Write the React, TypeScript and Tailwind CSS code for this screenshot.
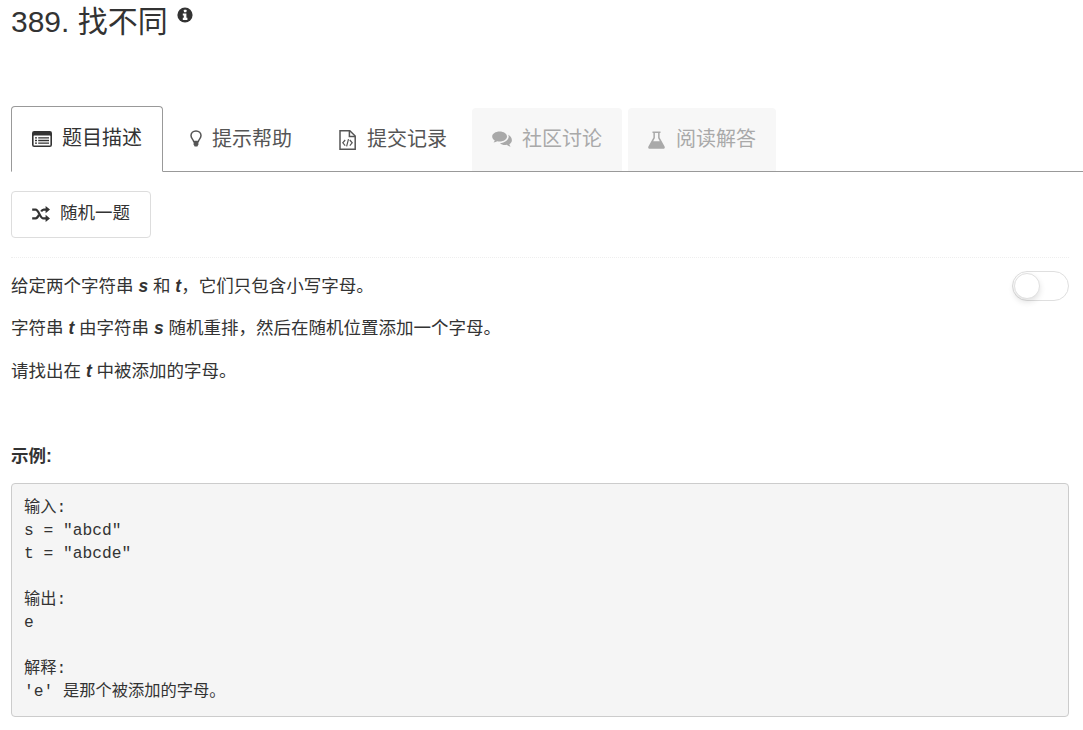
import type { ReactNode } from "react";

const InfoIcon = () => (
  <svg width="16" height="16" viewBox="0 0 16 16" className="ml-[9px] mt-[6px] shrink-0">
    <circle cx="8" cy="8" r="7.6" fill="#333" />
    <rect x="6.9" y="2.8" width="2.6" height="2.4" rx="0.4" fill="#fff" />
    <path d="M5.8 6.4H9.4V10.8H10.4V13H5.8V10.8H6.8V8.6H5.8Z" fill="#fff" />
  </svg>
);

const ListIcon = () => (
  <svg width="20" height="16" viewBox="0 0 20 16" className="shrink-0">
    <rect x="0" y="0" width="20" height="16" rx="2.2" fill="#333" />
    <rect x="1.6" y="4.4" width="16.8" height="10" rx="0.5" fill="#fff" />
    <path d="M3 6.2H5V7.6H3ZM6.2 6.2H17V7.6H6.2ZM3 8.8H5V10.2H3ZM6.2 8.8H17V10.2H6.2ZM3 11.4H5V12.8H3ZM6.2 11.4H17V12.8H6.2Z" fill="#333" />
  </svg>
);

const BulbIcon = () => (
  <svg width="12" height="17" viewBox="0 0 12 17" className="shrink-0 mt-[-2px]">
    <path d="M6 1C3 1 1 3.1 1 5.6C1 8.4 3.3 9.3 3.7 11.6H8.3C8.7 9.3 11 8.4 11 5.6C11 3.1 9 1 6 1Z" fill="none" stroke="#555" strokeWidth="1.5" />
    <path d="M3.6 11.4H8.4V14.6L7.4 16.4H4.6L3.6 14.6Z" fill="#555" />
  </svg>
);

const FileCodeIcon = () => (
  <svg width="17" height="20" viewBox="0 0 17 20" className="shrink-0">
    <path d="M1 .8H10.8L16.2 6V19.2H1Z" fill="none" stroke="#555" strokeWidth="1.5" />
    <path d="M10.4 1V6.4H16" fill="none" stroke="#555" strokeWidth="1.5" />
    <path d="M6.2 10L3.8 12.8L6.2 15.6M10.8 10L13.2 12.8L10.8 15.6M9.5 9.2L7.6 16.4" fill="none" stroke="#555" strokeWidth="1.2" />
  </svg>
);

const CommentsIcon = () => (
  <svg width="20" height="17" viewBox="0 0 20 17" className="shrink-0">
    <path d="M7.6 0.5C3.6 0.5 0.2 2.7 0.2 5.6C0.2 7.2 1.2 8.6 2.8 9.6C2.5 10.4 2 11 1.5 11.5C3 11.3 4.3 10.8 5.3 10.3C6 10.5 6.8 10.6 7.6 10.6C11.8 10.6 15 8.4 15 5.6C15 2.7 11.8 0.5 7.6 0.5Z" fill="#a9a9a9" />
    <path d="M16.2 3.8C16.6 4.4 16.7 5 16.7 5.6C16.7 9.2 12.8 12 8 12.2C9.2 13.3 11 14 13 14C13.6 14 14.1 13.9 14.7 13.8C15.7 14.6 17 15.4 18.6 15.7C18.1 15.1 17.6 14.3 17.3 13.3C18.9 12.4 19.9 10.9 19.9 9.3C19.9 7 18.4 5 16.2 3.8Z" fill="#a9a9a9" />
  </svg>
);

const FlaskIcon = () => (
  <svg width="17" height="18" viewBox="0 0 17 18" className="shrink-0">
    <path d="M4.5 0.5H12.5V2H11.6V6.6L16.6 15.6C17.2 16.8 16.4 17.8 15.2 17.8H1.8C0.6 17.8 -0.2 16.8 0.4 15.6L5.4 6.6V2H4.5Z" fill="#a9a9a9" />
    <path d="M6.9 2H10.1V7L11.8 10.2H5.2L6.9 7Z" fill="#f7f7f7" />
  </svg>
);

const RandomIcon = () => (
  <svg width="18" height="16" viewBox="0 0 18 16" className="shrink-0">
    <path d="M0.2 3.6H3.6C6.8 3.6 8 12.4 11.4 12.4H14.2" fill="none" stroke="#333" strokeWidth="2.2" />
    <path d="M0.2 12.4H3.6C5.2 12.4 6.2 10.6 7 8.8M9.2 5.6C9.8 4.4 10.6 3.6 11.8 3.6H14.2" fill="none" stroke="#333" strokeWidth="2.2" />
    <path d="M13.6 0L18 3.6L13.6 7.2ZM13.6 8.8L18 12.4L13.6 16Z" fill="#333" />
  </svg>
);

function PlainTab({ icon, label, className }: { icon: ReactNode; label: string; className: string }) {
  return (
    <div className={`h-[63px] flex items-center text-[20px] text-[#555] ${className}`}>
      {icon}
      <span className="relative top-[-1px]">{label}</span>
    </div>
  );
}

function DisabledTab({ icon, label, className }: { icon: ReactNode; label: string; className: string }) {
  return (
    <div className={`h-[63px] rounded-t-[4px] bg-[#f7f7f7] flex items-center pl-5 text-[20px] text-[#a9a9a9] ${className}`}>
      {icon}
      <span className="relative top-[-1px]">{label}</span>
    </div>
  );
}

export default function App() {
  return (
    <div className="font-['Liberation_Sans','Noto_Sans_CJK_SC',sans-serif] w-[1083px] h-[730px] overflow-hidden bg-white text-[#333] pl-[11px] pr-[14px]">
      <h3 className="text-[30px] leading-[42px] font-normal h-[106px] pt-[1px] flex items-start">
        <span>389. 找不同</span>
        <InfoIcon />
      </h3>
      <div className="flex items-end border-b border-[#999] mr-[-14px] h-[66px]">
        <div className="h-[66px] w-[152px] mb-[-1px] border border-[#999] border-b-white rounded-t-[4px] bg-white flex items-center pl-5 gap-[10px] text-[20px] text-[#333]">
          <ListIcon />
          <span className="relative top-[-1px]">题目描述</span>
        </div>
        <PlainTab className="w-[154px] pl-[27px] gap-[10px]" label="提示帮助" icon={<BulbIcon />} />
        <PlainTab className="w-[155px] pl-[22px] gap-[11px]" label="提交记录" icon={<FileCodeIcon />} />
        <DisabledTab className="w-[150px] gap-[10px]" label="社区讨论" icon={<CommentsIcon />} />
        <DisabledTab className="w-[148px] ml-[6px] gap-[11px]" label="阅读解答" icon={<FlaskIcon />} />
      </div>
      <div className="mt-[19px] h-[47px] w-[140px] border border-[#ddd] rounded-[4px] flex items-center pl-5 pb-[2px] gap-[10px] text-[17.5px] text-[#333]">
        <RandomIcon />
        <span>随机一题</span>
      </div>
      <div className="mt-[19px] border-t border-dotted border-[#eee] flex justify-between items-start">
        <div className="text-[17.5px] leading-[25px] pt-[16px]">
          <p className="mb-[17px]">给定两个字符串 <b><i>s</i></b> 和 <b><i>t</i></b>，它们只包含小写字母。</p>
          <p className="mb-[18px]">字符串 <b><i>t</i></b> 由字符串 <b><i>s</i></b> 随机重排，然后在随机位置添加一个字母。</p>
          <p>请找出在 <b><i>t</i></b> 中被添加的字母。</p>
        </div>
        <div className="mt-[13px] w-[57px] h-[30px] rounded-full border border-[#dfdfdf] bg-white pl-[1px] pt-[1px]">
          <div className="w-[26px] h-[26px] rounded-full bg-white border border-[#e0e0e0] shadow-[0_3px_6px_rgba(0,0,0,0.12)]" />
        </div>
      </div>
      <p className="mt-[60px] text-[17.5px] leading-[25px] font-bold">示例:</p>
      <pre className="mt-[14px] h-[234px] rounded-[4px] border border-[#ccc] bg-[#f5f5f5] pt-[11.5px] px-3 font-['Liberation_Mono','Noto_Sans_CJK_SC',monospace] text-[16.25px] leading-[23.1px] text-[#333]">{`输入:
s = "abcd"
t = "abcde"

输出:
e

解释:
'e' 是那个被添加的字母。`}</pre>
    </div>
  );
}
